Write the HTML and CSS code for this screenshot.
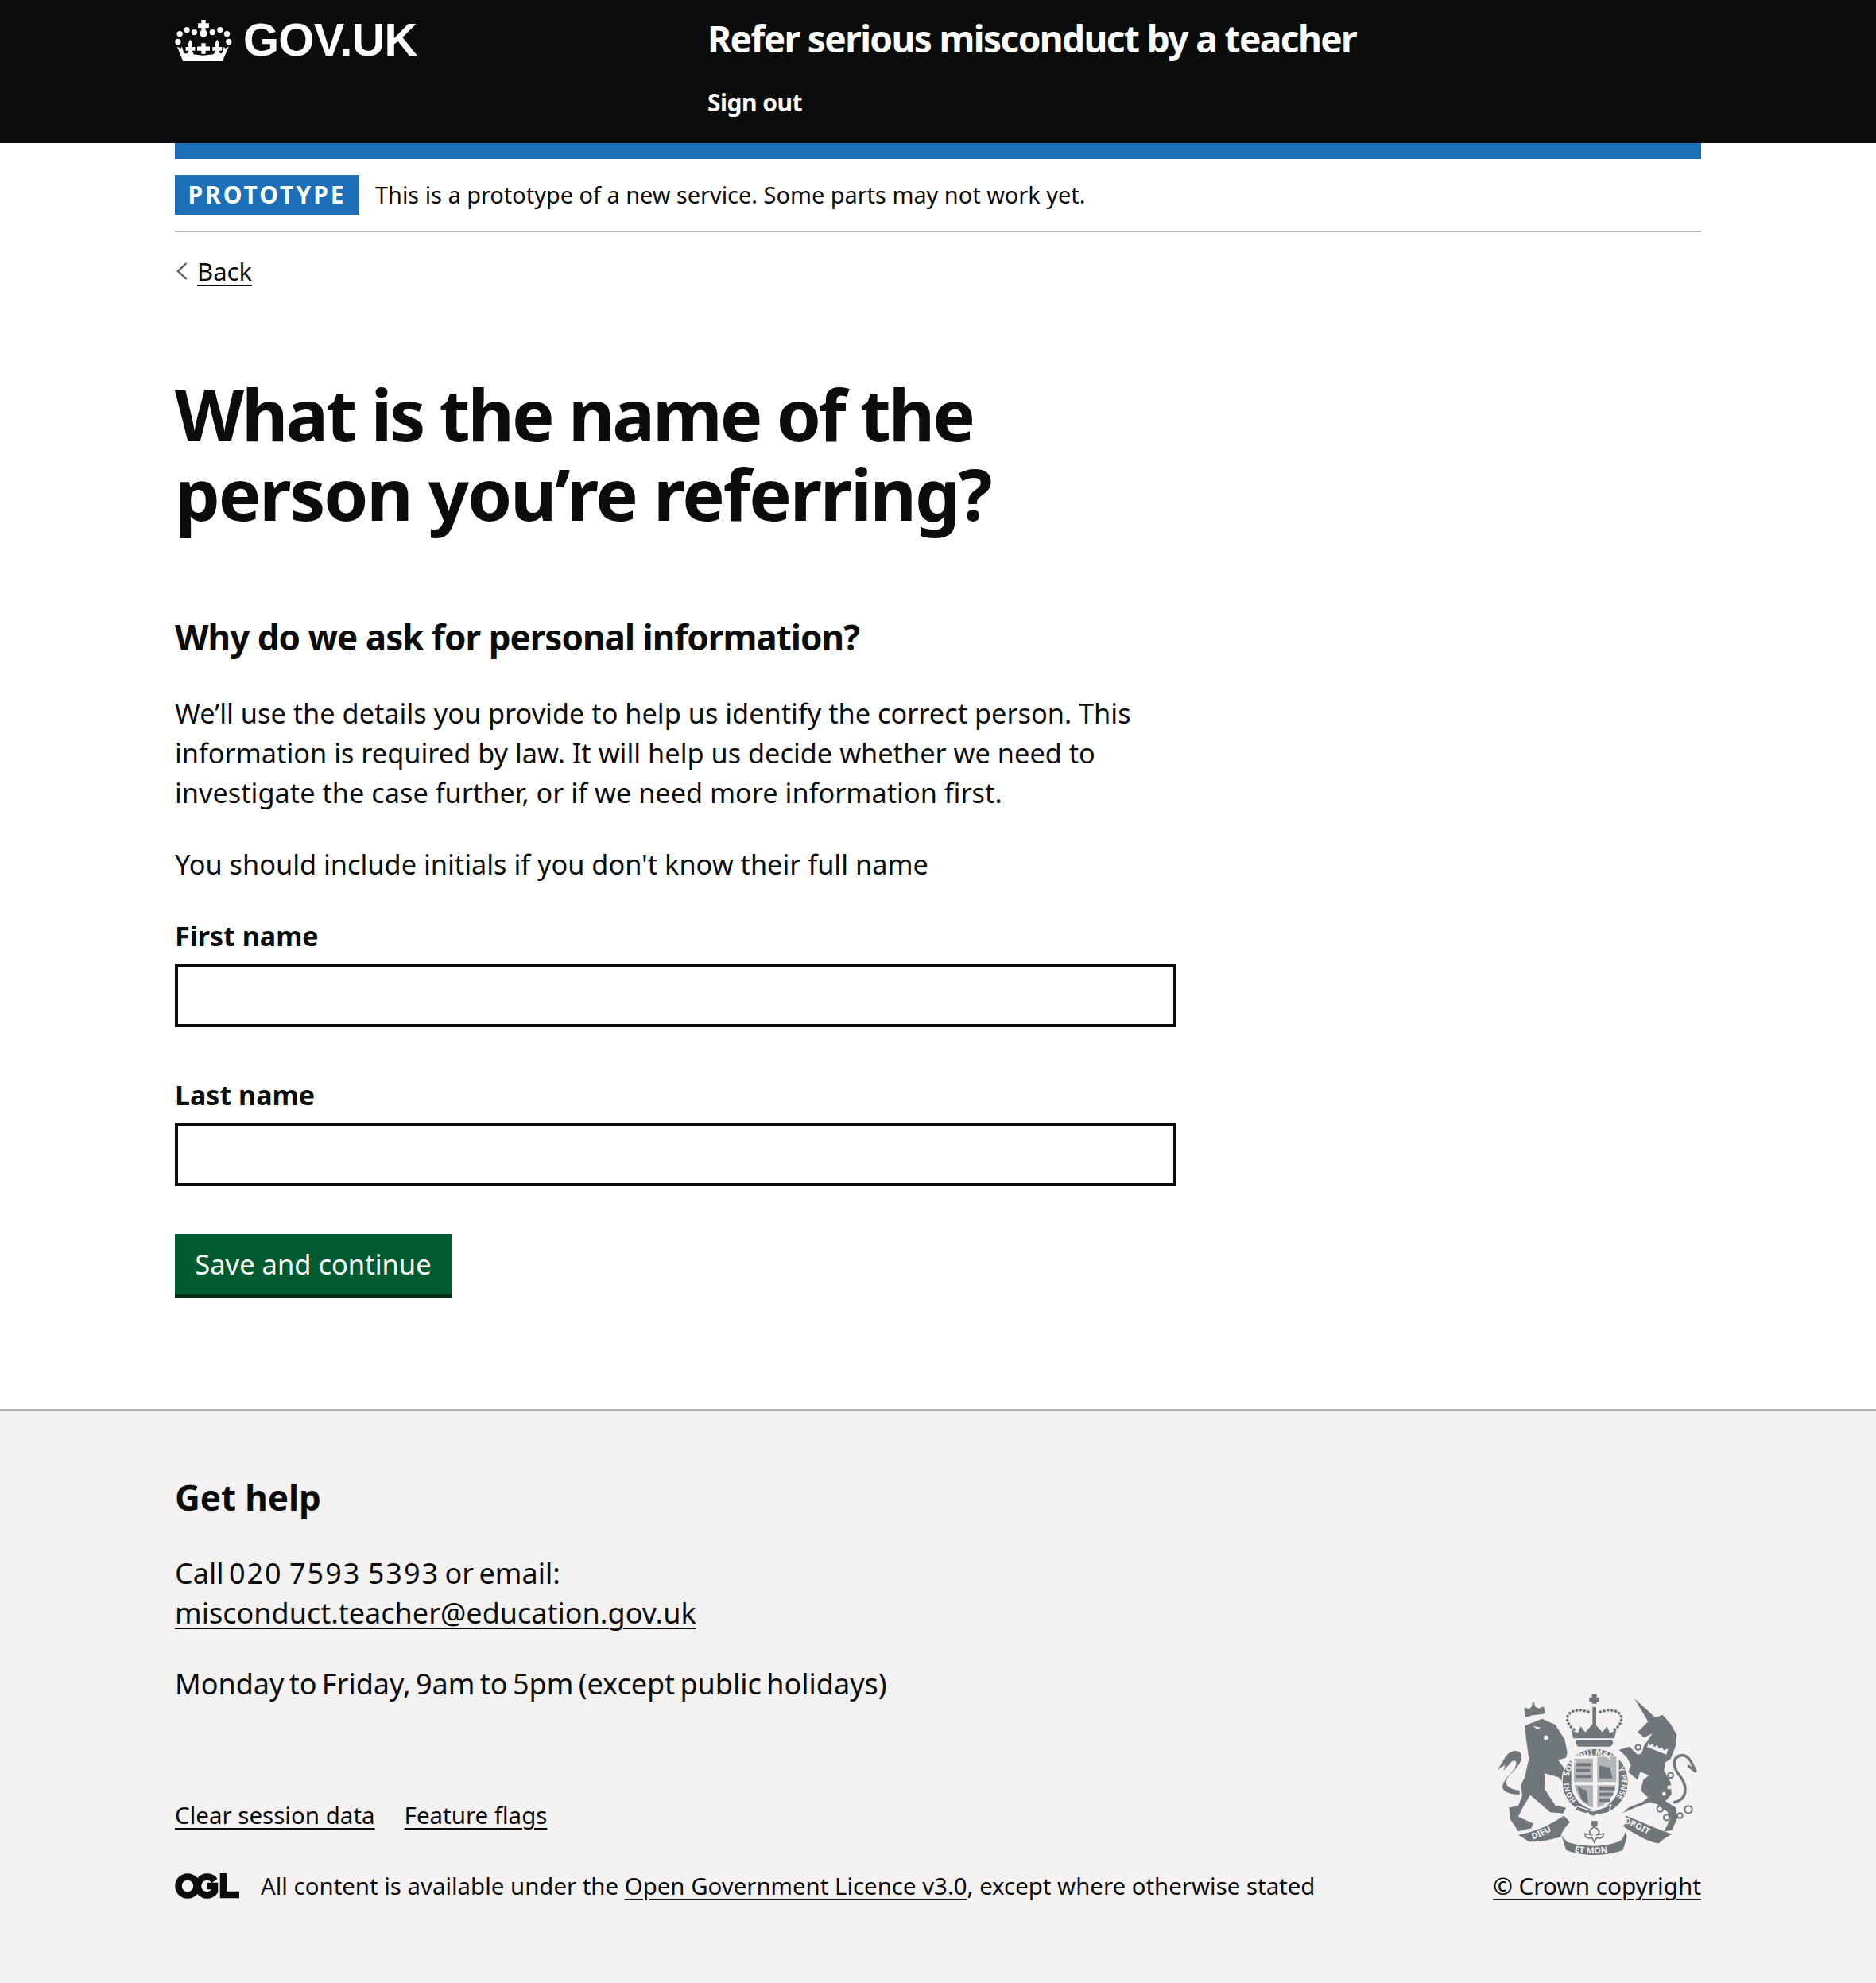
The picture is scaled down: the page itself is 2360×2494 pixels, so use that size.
FILE: index.html
```html
<!DOCTYPE html>
<html lang="en">
<head>
    <meta charset="UTF-8">
    <meta name="viewport" content="width=device-width, initial-scale=1.0">
    <title>What is the name of the person you're referring?</title>
    <link rel="stylesheet" href="styles.css">
</head>
<body>

    <header class="site-header">
        <div class="site-header-inner">
            <div class="site-logo">
                <svg class="crown" viewBox="60 62 216 160" aria-hidden="true">
                    <g fill="#fff">
                        <circle cx="71" cy="148" r="11"/><circle cx="78" cy="118" r="11"/>
                        <circle cx="105" cy="103" r="11"/><circle cx="133" cy="112" r="11"/>
                        <circle cx="202" cy="112" r="11"/><circle cx="231" cy="103" r="11"/>
                        <circle cx="257" cy="118" r="11"/><circle cx="264" cy="148" r="11"/>
                        <path d="M160 65h16v13h13v17h-13v9c8 6 8 26-8 28-16-2-16-22-8-28v-9h-13v-17h13z"/>
                        <path d="M160 153h16v13h16v16h-16v12h-16v-12h-16v-16h16z"/>
                        <path d="M118 140c8 10 10 20 6 28h12v14h-12l8 14h-28l8-14h-12v-14h12c-4-8-2-18 6-28z"/>
                        <path d="M220 140c8 10 10 20 6 28h12v14h-12l8 14h-28l8-14h-12v-14h12c-4-8-2-18 6-28z"/>
                        <path d="M68 166l14 8 4-8 8 26 72 8 72-8 8-26 4 8 14-8-24 56H90z"/>
                    </g>
                </svg>
                <span class="logo-text">GOV.UK</span>
            </div>
            <div class="site-service">
                <div class="service-name">Refer serious misconduct by a teacher</div>
                <a class="sign-out" href="#">Sign out</a>
            </div>
        </div>
    </header>

    <div class="page">
        <div class="blue-bar"></div>

        <div class="phase-banner">
            <strong class="tag">PROTOTYPE</strong>
            <span>This is a prototype of a new service. Some parts may not work yet.</span>
        </div>

        <a class="back-link" href="#">
            <svg class="chevron" viewBox="0 0 14 22" aria-hidden="true"><path d="M12.500 1L2 11l10.500 10" fill="none" stroke="#505a5f" stroke-width="2.400"/></svg>
            <span>Back</span>
        </a>

        <main class="content">
            <h1>What is the name of the <span class="second-line">person you’re referring?</span></h1>
            <h2>Why do we ask for personal information?</h2>
            <p>We’ll use the details you provide to help us identify the correct person. This information is required by law. It will help us decide whether we need to investigate the case further, or if we need more information first.</p>
            <p>You should include initials if you don't know their full name</p>

            <div class="form-group">
                <label for="first-name">First name</label>
                <input id="first-name" type="text">
            </div>
            <div class="form-group">
                <label for="last-name">Last name</label>
                <input id="last-name" type="text">
            </div>
            <button type="button">Save and continue</button>
        </main>
    </div>

    <footer class="site-footer">
        <div class="footer-inner">
            <div class="footer-left">
                <h2>Get help</h2>
                <p class="help-line">Call <span class="phone">020 7593 5393</span> or email:<br><a href="#">misconduct.teacher@education.gov.uk</a></p>
                <p class="help-line">Monday to Friday, 9am to 5pm (except public holidays)</p>

                <div class="meta-links">
                    <a href="#">Clear session data</a>
                    <a href="#">Feature flags</a>
                </div>
                <div class="licence">
                    <svg class="ogl" viewBox="0 0 82 34" aria-hidden="true">
                        <g fill="none" stroke="#0b0c0c" stroke-width="8.500">
                            <circle cx="16" cy="17" r="11.500"/>
                            <path d="M50 10.500a11.500 11.500 0 1 0 0 13V17H41"/>
                            <path d="M61 1v27h20"/>
                        </g>
                    </svg>
                    <span>All content is available under the <a href="#">Open Government Licence v3.0</a>, except where otherwise stated</span>
                </div>
            </div>
            <div class="footer-right">
                <svg class="crest" viewBox="60 60 780 620" aria-hidden="true">
                    <defs>
                        <path id="ring-top" d="M341 372A100 100 0 0 1 511 321"/>
                        <path id="ring-right" d="M527 342A100 100 0 0 1 497 474"/>
                        <path id="ring-bottom" d="M369 463A100 100 0 0 1 341 385"/>
                        <path id="ribbon-left" d="M205 610Q265 590 315 550"/>
                        <path id="ribbon-mid" d="M350 655Q435 672 525 652"/>
                        <path id="ribbon-right" d="M548 548Q610 570 672 615"/>
                    </defs>
                    <g fill="#6f777b">
                        <!-- lion -->
                        <path d="M175 180l65-25 50 22 35 55 10 50-5 20-30 8 32 42 10 45-10 13-30-35-52-15v60l40 62 40 8-10 22-50-5-40-35-35-30-25 42-20 40 55 25-5 18-50 12-30-45-5-45 35-5 15-40-5-40 15-30 15-70-10-70z"/>
                        <path d="M178 150l-6-30 3-8 16 6 10-10 3-18 5 0 4 18 14 8 18-8 8 24-10 5-42 5z"/>
                        <path d="M155 425c-45-5-65-25-40-55 25-30 55-50 45-85-10-15-40-15-60 15l-28 48 28-20-5 22 28-32c15-12 22-4 18 12-8 25-42 45-50 75-5 18 15 35 64 35z"/>
                        <!-- unicorn -->
                        <path d="M588 78L668 150 695 140 725 175 748 215 745 255 725 305 705 320 700 350 725 395 728 440 705 465 745 490 750 530 730 575 700 580 725 530 712 505 670 475 645 470 590 490 545 510 565 490 620 468 640 452 612 425 622 385 645 368 610 355 600 385 565 355 575 330 560 300 530 272 570 260 600 290 615 285 625 255 640 235 655 210 625 225 600 205 640 165Z"/>
                        <!-- crown over shield -->
                        <path d="M428 62h18v12h10v16h-10v8h-18v-8h-10v-16h10z"/>
                        <path d="M430 110h14v70h-14z"/>
                        <path d="M358 228l-8-30 25 10 10-25 18 22 27-30 10 0 27 30 18-22 10 25 25-10-8 30z"/>
                        <path d="M372 234h130c10 8 5 20-5 26H377c-10-6-15-18-5-26z"/>
                        <!-- motto ribbon -->
                        <path d="M150 592C220 580 270 555 322 520L345 545C325 565 312 585 310 600 270 610 235 620 190 618Z"/>
                        <path d="M312 590C316 600 325 610 335 620 395 640 480 640 535 615 545 605 550 595 555 580L560 600 545 650C480 675 390 675 330 650Z"/>
                        <path d="M555 520C610 540 670 570 730 590 710 600 695 610 680 625 640 620 590 590 545 560L560 545Z"/>
                        <path d="M425 540h24v20h-24z"/>
                    </g>
                    <path d="M437 562c20 12 22 22 12 30l24-4c-2 14-12 22-26 14l-10 18-10-18c-14 8-24 0-26-14l24 4c-10-8-8-18 12-30z" fill="#f3f2f1" stroke="#6f777b" stroke-width="5"/>
                    <path d="M360 195C320 165 325 120 390 122L425 132M514 195C554 165 549 120 484 122L449 132" fill="none" stroke="#6f777b" stroke-width="11" stroke-dasharray="0.100 14.500" stroke-linecap="round"/>
                    <path d="M735 470C790 460 790 410 760 370 730 335 730 295 770 292 795 295 805 320 820 355L790 330" fill="none" stroke="#6f777b" stroke-width="10"/>
                    <g fill="#f3f2f1">
                        <circle cx="720" cy="413" r="8"/><circle cx="700" cy="438" r="7"/>
                        <path d="M640 240l8 14 10-8 6 14 10-8 8 14 10-6 8 12 18-8-8 28-75-30z" stroke="#6f777b" stroke-width="3"/>
                        <circle cx="255" cy="226" r="9"/>
                        <path d="M205 182l30 6-14 6z"/>
                    </g>
                    <g fill="none" stroke="#6f777b" stroke-width="6">
                        <circle cx="602" cy="262" r="10"/><circle cx="592" cy="345" r="11"/>
                        <circle cx="725" cy="368" r="10"/><circle cx="685" cy="495" r="11"/>
                        <circle cx="710" cy="527" r="11"/><circle cx="760" cy="520" r="10"/>
                        <circle cx="792" cy="497" r="14"/>
                    </g>
                    <!-- shield -->
                    <circle cx="440" cy="392" r="125" fill="#6f777b" stroke="#f3f2f1" stroke-width="4"/>
                    <path d="M350 292h180v110c0 50-40 88-90 98-50-10-90-48-90-98z" fill="#f3f2f1"/>
                    <g fill="#6f777b">
                        <path d="M360 305h72v88h-72zM448 298h72v95h-72z" opacity="0.500"/>
                        <path d="M362 405h70v85c-35-10-60-40-70-85zM448 405h70c-8 45-35 75-70 85z" opacity="0.500"/>
                        <path d="M368 322h58v12h-58zM368 344h52v12h-52zM368 366h58v12h-58zM456 330l40 10 10 40h-50zM456 412h58v12h-58zM456 434h52v12h-52zM456 456h40v12h-40zM372 410l36 16 6 50-24-14z"/>
                    </g>
                    <path d="M362 498l70 24 60-14 8-28-68 24-60-20z" fill="#6f777b" stroke="#f3f2f1" stroke-width="4"/>
                    <circle cx="412" cy="513" r="6" fill="#f3f2f1"/><circle cx="448" cy="518" r="6" fill="#f3f2f1"/>
                    <g class="crest-text">
                        <text font-size="29"><textPath href="#ring-top">SOIT QUI MAL</textPath></text>
                        <text font-size="29"><textPath href="#ring-right">Y PENSE</textPath></text>
                        <text font-size="27"><textPath href="#ring-bottom">HONI</textPath></text>
                        <text font-size="32"><textPath href="#ribbon-left">DIEU</textPath></text>
                        <text font-size="32"><textPath href="#ribbon-mid" startOffset="12">ET MON</textPath></text>
                        <text font-size="32"><textPath href="#ribbon-right">DROIT</textPath></text>
                    </g>
                </svg>
                <a href="#">© Crown copyright</a>
            </div>
        </div>
    </footer>

</body>
</html>
```

FILE: styles.css
```css
body {
    font-family: "Noto Sans", Arial, sans-serif;
    font-size: 34.300px;
    line-height: 50px;
    color: #0b0c0c;
    background-color: #fff;
    margin: 0;
}

a {
    color: #0b0c0c;
    text-decoration: underline;
    text-decoration-thickness: 2px;
    text-underline-offset: 5px;
}

/* Header */
.site-header {
    background-color: #0b0c0c;
    color: #fff;
    height: 180px;
}

.site-header-inner {
    width: 1920px;
    margin: 0 auto;
    display: flex;
}

.site-logo {
    width: 670px;
    height: 100px;
    display: flex;
    align-items: center;
}

.crown {
    width: 72px;
    height: 53px;
    margin-right: 14px;
}

.logo-text {
    font-family: "Liberation Sans", Arial, sans-serif;
    font-weight: 700;
    font-size: 58px;
    letter-spacing: -0.800px;
}

.site-service {
    padding-top: 18px;
}

.service-name {
    font-size: 46px;
    font-weight: 700;
    line-height: 60px;
    letter-spacing: -1.600px;
}

.sign-out {
    display: block;
    margin-top: 31px;
    color: #fff;
    font-size: 30px;
    font-weight: 700;
    line-height: 40px;
    letter-spacing: -0.500px;
    text-decoration: none;
}

/* Main */
.page {
    width: 1920px;
    margin: 0 auto;
}

.blue-bar {
    height: 20px;
    background-color: #1d70b8;
}

.phase-banner {
    display: flex;
    align-items: center;
    padding: 20px 0;
    border-bottom: 2px solid #b1b4b6;
    font-size: 28.900px;
    line-height: 50px;
}

.tag {
    width: 232px;
    height: 50px;
    margin-right: 20px;
    background-color: #1d70b8;
    color: #fff;
    font-size: 30px;
    letter-spacing: 3px;
    text-align: center;
}

.back-link {
    display: inline-flex;
    align-items: center;
    margin-top: 29px;
    font-size: 31px;
    line-height: 40px;
}

.chevron {
    width: 14px;
    height: 22px;
    margin: 0 12px 0 2px;
}

.content {
    width: 1260px;
    padding-top: 106px;
}

.content h1 {
    width: 1100px;
    margin: 0 0 101px;
    font-size: 90px;
    line-height: 100px;
    font-weight: 700;
    letter-spacing: -3.100px;
}

.second-line {
    display: block;
    letter-spacing: -2.200px;
}

.content h2 {
    margin: 0 0 41px;
    font-size: 44px;
    line-height: 60px;
    font-weight: 700;
    letter-spacing: -1px;
}

.content p {
    margin: 0 0 40px;
}

.form-group {
    margin-bottom: 60px;
}

.form-group label {
    display: block;
    margin-bottom: 10px;
    font-weight: 700;
    font-size: 34px;
}

.form-group input {
    display: block;
    width: 100%;
    height: 80px;
    box-sizing: border-box;
    border: 4px solid #0b0c0c;
    background-color: #fff;
}

button {
    display: block;
    width: 348px;
    height: 80px;
    box-sizing: border-box;
    padding: 0 0 2px;
    background-color: #005c30;
    color: #fff;
    border: none;
    border-bottom: 4px solid #002d18;
    font-family: inherit;
    font-size: 34.500px;
    cursor: pointer;
    margin-bottom: 140px;
}

/* Footer */
.site-footer {
    background-color: #f3f2f1;
    border-top: 2px solid #b1b4b6;
}

.footer-inner {
    width: 1920px;
    margin: 0 auto;
    padding-top: 79px;
    padding-bottom: 102px;
    display: flex;
    justify-content: space-between;
    align-items: flex-end;
}

.footer-left h2 {
    margin: 0 0 41px;
    font-size: 44px;
    line-height: 60px;
    font-weight: 700;
    letter-spacing: -0.100px;
}

.help-line {
    margin: 0 0 39px;
    font-size: 36px;
    word-spacing: -3px;
}

.phone {
    letter-spacing: 2px;
}

.meta-links {
    display: flex;
    gap: 37px;
    margin-top: 120px;
    margin-bottom: 49px;
    font-size: 29.500px;
    line-height: 40px;
}

.licence {
    display: flex;
    align-items: center;
    font-size: 29.400px;
    line-height: 40px;
}

.ogl {
    width: 82px;
    height: 34px;
    margin-right: 26px;
}

.footer-right {
    display: flex;
    flex-direction: column;
    align-items: flex-end;
    font-size: 29.700px;
    line-height: 40px;
}

.crest {
    width: 260px;
    height: 207px;
    margin-bottom: 15px;
}

.crest-text {
    font-family: "Noto Sans", Arial, sans-serif;
    font-weight: 700;
    fill: #f3f2f1;
}
```
